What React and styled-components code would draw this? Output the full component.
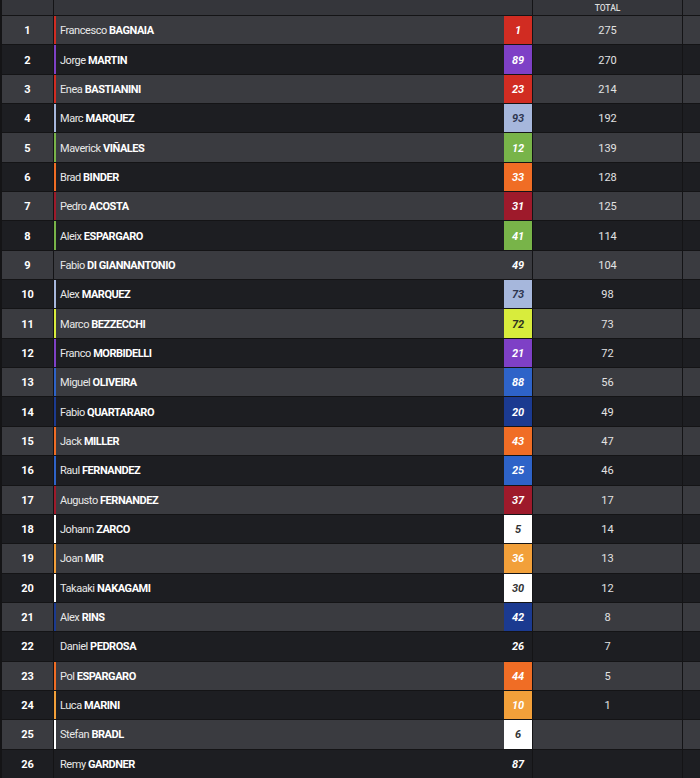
import React from "react";
import styled, { createGlobalStyle } from "styled-components";

const Global = createGlobalStyle`
  html, body { margin: 0; padding: 0; background: #141416; }
  body { font-family: Roboto, "Noto Sans", sans-serif; }
`;

const TEAMS = {
  ducati: { bg: "#d12c22", fg: "#ffffff" },
  pramac: { bg: "#7e40c6", fg: "#ffffff" },
  gresini: { bg: "#a6b7dc", fg: "#2d3550" },
  aprilia: { bg: "#78b449", fg: "#ffffff" },
  ktm: { bg: "#f06d25", fg: "#ffffff" },
  tech3: { bg: "#9e1a2b", fg: "#ffffff" },
  vr46: { bg: "#d8ec3c", fg: "#2f3320" },
  trackhouse: { bg: "#2e63c8", fg: "#ffffff" },
  yamaha: { bg: "#1b3a90", fg: "#ffffff" },
  lcr: { bg: "#ffffff", fg: "#333333" },
  repsol: { bg: "#f2a03a", fg: "#ffffff" },
  none: { bg: "transparent", fg: "#ffffff" },
};

const riders = [
  ["Francesco", "BAGNAIA", "1", "ducati", "275"],
  ["Jorge", "MARTIN", "89", "pramac", "270"],
  ["Enea", "BASTIANINI", "23", "ducati", "214"],
  ["Marc", "MARQUEZ", "93", "gresini", "192"],
  ["Maverick", "VIÑALES", "12", "aprilia", "139"],
  ["Brad", "BINDER", "33", "ktm", "128"],
  ["Pedro", "ACOSTA", "31", "tech3", "125"],
  ["Aleix", "ESPARGARO", "41", "aprilia", "114"],
  ["Fabio", "DI GIANNANTONIO", "49", "none", "104"],
  ["Alex", "MARQUEZ", "73", "gresini", "98"],
  ["Marco", "BEZZECCHI", "72", "vr46", "73"],
  ["Franco", "MORBIDELLI", "21", "pramac", "72"],
  ["Miguel", "OLIVEIRA", "88", "trackhouse", "56"],
  ["Fabio", "QUARTARARO", "20", "yamaha", "49"],
  ["Jack", "MILLER", "43", "ktm", "47"],
  ["Raul", "FERNANDEZ", "25", "trackhouse", "46"],
  ["Augusto", "FERNANDEZ", "37", "tech3", "17"],
  ["Johann", "ZARCO", "5", "lcr", "14"],
  ["Joan", "MIR", "36", "repsol", "13"],
  ["Takaaki", "NAKAGAMI", "30", "lcr", "12"],
  ["Alex", "RINS", "42", "yamaha", "8"],
  ["Daniel", "PEDROSA", "26", "none", "7"],
  ["Pol", "ESPARGARO", "44", "ktm", "5"],
  ["Luca", "MARINI", "10", "repsol", "1"],
  ["Stefan", "BRADL", "6", "lcr", ""],
  ["Remy", "GARDNER", "87", "none", ""],
];

const Table = styled.div`
  width: 700px;
  height: 778px;
  display: grid;
  grid-template-rows: 15px repeat(26, 1fr);
  row-gap: 1px;
  background: #141416;
  overflow: hidden;
`;

const Row = styled.div`
  display: grid;
  grid-template-columns: 51px 478px 149px 1fr;
  column-gap: 1px;
  padding-left: 2px;
  min-height: 0;
`;

const Cell = styled.div`
  background: ${(p) => (p.$dark ? "#1d1e22" : "#3a3b40")};
  display: flex;
  align-items: center;
  padding-top: 1px;
  box-sizing: border-box;
  min-width: 0;
  min-height: 0;
`;

const HeadCell = styled(Cell)`
  background: #35363b;
  justify-content: center;
  color: #dcdcdc;
  font-size: 8.5px;
  font-weight: 500;
  padding-top: 0;
`;

const PosCell = styled(Cell)`
  justify-content: center;
  color: #ffffff;
  font-size: 11px;
  font-weight: 700;
`;

const NameCell = styled(Cell)`
  justify-content: space-between;
  align-items: stretch;
  padding-top: 0;
  border-left: 2px solid ${(p) => p.$stripe};
`;

const Name = styled.div`
  display: flex;
  align-items: center;
  padding: 1px 0 0 4px;
  color: #e8e8e8;
  font-size: 11px;
  white-space: pre;
  letter-spacing: -0.45px;
`;

const Last = styled.span`
  font-weight: 700;
  color: #ffffff;
`;

const NumBox = styled.div`
  width: 28px;
  display: flex;
  align-items: center;
  justify-content: center;
  padding-top: 1px;
  box-sizing: border-box;
  background: ${(p) => p.$bg};
  color: ${(p) => p.$fg};
  font-size: 11px;
  font-weight: 700;
  font-style: italic;
`;

const TotalCell = styled(Cell)`
  justify-content: center;
  color: #e2e2e2;
  font-size: 11px;
`;

export default function App() {
  return (
    <>
      <Global />
      <Table>
        <Row>
          <HeadCell />
          <HeadCell />
          <HeadCell>TOTAL</HeadCell>
          <HeadCell />
        </Row>
        {riders.map(([first, last, num, team, total], i) => {
          const dark = i % 2 === 1;
          const t = TEAMS[team];
          const stripe = team === "none" ? (dark ? "#1d1e22" : "#3a3b40") : t.bg;
          return (
            <Row key={i}>
              <PosCell $dark={dark}>{i + 1}</PosCell>
              <NameCell $dark={dark} $stripe={stripe}>
                <Name>
                  {first} <Last>{last}</Last>
                </Name>
                <NumBox $bg={t.bg} $fg={t.fg}>{num}</NumBox>
              </NameCell>
              <TotalCell $dark={dark}>{total}</TotalCell>
              <Cell $dark={dark} />
            </Row>
          );
        })}
      </Table>
    </>
  );
}
